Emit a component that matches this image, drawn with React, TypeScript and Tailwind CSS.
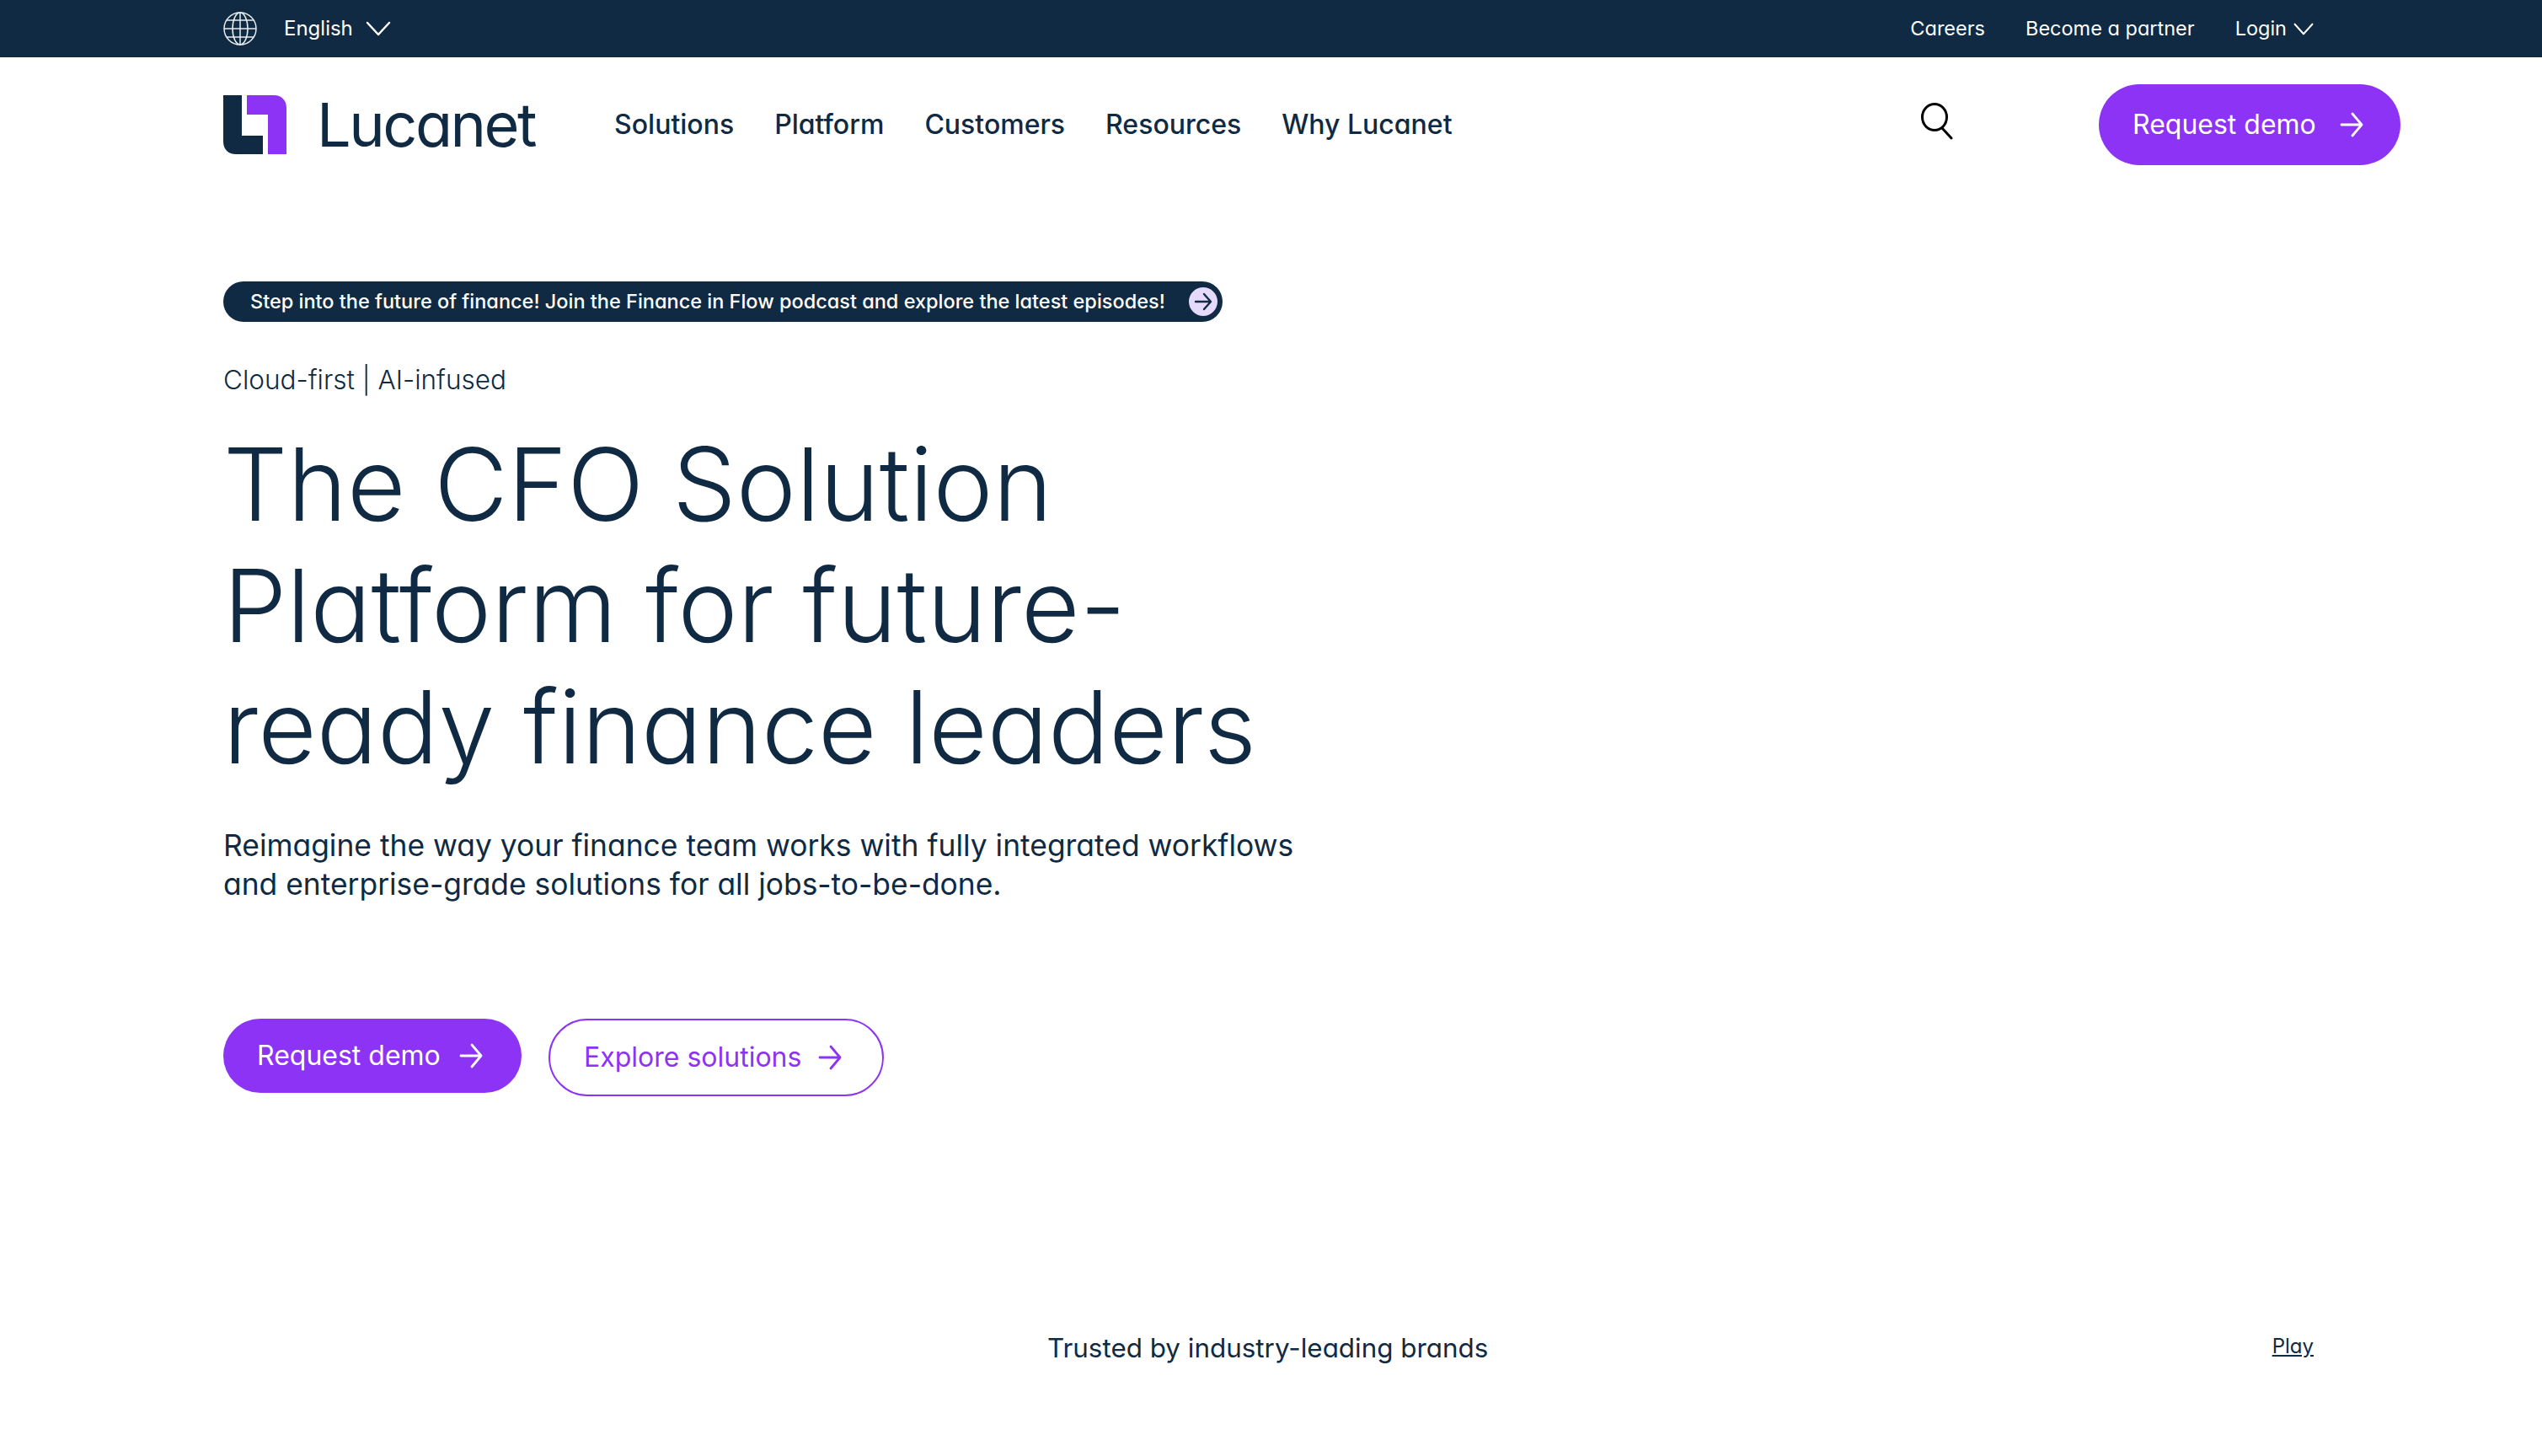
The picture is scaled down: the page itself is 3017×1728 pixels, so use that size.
const font = "font-['Inter','Noto_Sans',sans-serif] [font-feature-settings:'cv11']";

function Globe() {
  return (
    <svg width="42" height="42" viewBox="0 0 42 42" fill="none" stroke="#e8ecef" strokeWidth="1.5">
      <circle cx="21" cy="21" r="19" />
      <ellipse cx="21" cy="21" rx="9" ry="19" />
      <path d="M21 2v38M2 21h38M5 11h32M5 31h32" />
    </svg>
  );
}

function Logo() {
  return (
    <svg width="75" height="70" viewBox="0 0 75 70" className="shrink-0">
      <path d="M0 0h22v48h25v22H15C6 70 0 64 0 55z" fill="#0f2a42" />
      <path d="M28 0h32c9 0 15 6 15 15v55H53V23H28z" fill="#8c33f5" />
    </svg>
  );
}

function Search() {
  return (
    <svg width="40" height="44" viewBox="0 0 40 44" fill="none" stroke="#000" strokeWidth="3" strokeLinecap="round">
      <ellipse cx="17" cy="17" rx="14.5" ry="15.5" />
      <path d="M26 30l11 12" />
    </svg>
  );
}

function Chevron({ w, h }: { w: number; h: number }) {
  return (
    <svg width={w} height={h} viewBox="0 0 30 18" preserveAspectRatio="none" fill="none" stroke="#fff" strokeWidth="2.5" strokeLinecap="round" strokeLinejoin="round">
      <path d="M2 2l13 14L28 2" />
    </svg>
  );
}

function Arrow() {
  return (
    <svg width="28" height="30" viewBox="0 0 28 30" fill="none" stroke="currentColor" strokeWidth="2.8" strokeLinecap="round" strokeLinejoin="round" className="shrink-0">
      <path d="M2 15h24M15 2l11 13-11 13" />
    </svg>
  );
}

export default function App() {
  return (
    <div className={`${font} min-h-[1728px] bg-white text-[#0f2a42]`}>
      <div className="flex h-[68px] items-center bg-[#0f2a42] pl-[264px] pr-[271px] text-white">
        <Globe />
        <span className="ml-[31px] text-[24px]">English</span>
        <span className="ml-[15px]">
          <Chevron w={30} h={18} />
        </span>
        <div className="ml-auto flex items-center gap-[48px] text-[23.5px]">
          <span>Careers</span>
          <span>Become a partner</span>
          <span className="flex items-center gap-[8px]">
            Login
            <Chevron w={24} h={15} />
          </span>
        </div>
      </div>

      <header className="flex h-[160px] items-center pl-[265px] pr-[168px]">
        <Logo />
        <span className="ml-[36px] text-[72px] leading-none tracking-[-2.5px]">Lucanet</span>
        <nav className="ml-[94px] flex gap-[48px] text-[32px] font-medium">
          <span>Solutions</span>
          <span>Platform</span>
          <span>Customers</span>
          <span>Resources</span>
          <span>Why Lucanet</span>
        </nav>
        <div className="ml-auto mb-[8px] mr-[172px] flex">
          <Search />
        </div>
        <button className="flex h-[96px] w-[358px] items-center gap-[28px] rounded-full bg-[#8c33f5] pl-[40px] text-[32px] text-white">
          Request demo
          <Arrow />
        </button>
      </header>

      <main className="pl-[265px] pt-[106px]">
        <div className="flex h-[48px] w-[1186px] items-center justify-between rounded-full bg-[#0f2a42] pl-[32px] pr-[6px] text-[23.5px] font-medium whitespace-nowrap text-white">
          <span>Step into the future of finance! Join the Finance in Flow podcast and explore the latest episodes!</span>
          <span className="flex h-[34px] w-[34px] items-center justify-center rounded-full bg-[#e6dafc] text-[#0f2a42]">
            <svg width="22" height="24" viewBox="0 0 22 24" fill="none" stroke="currentColor" strokeWidth="2.4" strokeLinecap="round" strokeLinejoin="round">
              <path d="M2 12h18M12 3l8 9-8 9" />
            </svg>
          </span>
        </div>
        <p className="mt-[47px] text-[31.5px] leading-[44px] font-light">Cloud-first | AI-infused</p>
        <h1 className="mt-[30px] text-[120px] font-light leading-[144px] whitespace-nowrap">
          The CFO Solution
          <br />
          Platform for future-
          <br />
          ready finance leaders
        </h1>
        <p className="mt-[46px] text-[35.4px] leading-[46px]">
          Reimagine the way your finance team works with fully integrated workflows
          <br />
          and enterprise-grade solutions for all jobs-to-be-done.
        </p>
        <div className="mt-[136px] flex items-start gap-[32px]">
          <button className="flex h-[88px] w-[354px] items-center gap-[22px] rounded-full bg-[#8c33f5] pl-[40px] text-[32px] text-white">
            Request demo
            <Arrow />
          </button>
          <button className="flex h-[92px] w-[398px] items-center gap-[20px] rounded-full border-2 border-[#8c33f5] pl-[40px] text-[32px] text-[#8c33f5]">
            Explore solutions
            <Arrow />
          </button>
        </div>
        <div className="mt-[276px] flex items-center pr-[271px]">
          <span className="ml-[978px] text-[31.4px]">Trusted by industry-leading brands</span>
          <span className="mb-[6px] ml-auto text-[24px] underline">Play</span>
        </div>
      </main>
    </div>
  );
}
